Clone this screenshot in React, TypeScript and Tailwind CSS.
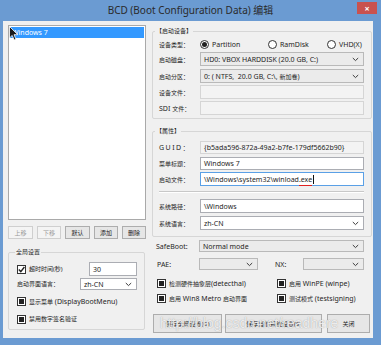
import type { ReactNode } from "react";

const font = "font-['Noto_Sans','Noto_Sans_CJK_SC',sans-serif]";

// CJK glyphs in the dialog read smaller than the Latin ones
function Zh({ children }: { children: ReactNode }) {
  return <span className="text-[6px]">{children}</span>;
}

function Chevron() {
  return (
    <svg width="7" height="5" viewBox="0 0 7 5" className="shrink-0">
      <path d="M0.8 1 L3.5 3.6 L6.2 1" fill="none" stroke="#3c3c3c" strokeWidth="1" />
    </svg>
  );
}

function Select({ children, white = false, className = "" }: { children?: ReactNode; white?: boolean; className?: string }) {
  return (
    <div
      className={`flex items-center justify-between border pl-[3px] pr-[4px] leading-none ${
        white ? "border-[#abadb3] bg-white" : "border-[#b9b9b9] bg-[#ebebeb]"
      } ${className}`}
    >
      <span className="whitespace-nowrap">{children}</span>
      <Chevron />
    </div>
  );
}

function Field({ kind = "normal", className = "", children }: { kind?: "normal" | "disabled" | "focus"; className?: string; children?: ReactNode }) {
  const look =
    kind === "disabled"
      ? "border-[#d5d5d5] bg-[#f3f3f3]"
      : kind === "focus"
      ? "border-[#5aa0e6] bg-white"
      : "border-[#abadb3] bg-white";
  return <div className={`flex items-center whitespace-nowrap border pl-[3px] leading-none ${look} ${className}`}>{children}</div>;
}

function Check({ mark = "box" }: { mark?: "box" | "tick" }) {
  return (
    <span className="flex h-[9px] w-[9px] shrink-0 items-center justify-center border border-[#333] bg-white">
      {mark === "box" ? (
        <span className="h-[5px] w-[5px] bg-[#222]" />
      ) : (
        <svg width="7" height="7" viewBox="0 0 7 7">
          <path d="M0.8 3.6 L2.8 5.6 L6.4 1" fill="none" stroke="#222" strokeWidth="1.4" />
        </svg>
      )}
    </span>
  );
}

function Radio({ on = false }: { on?: boolean }) {
  return (
    <span className="flex h-[9px] w-[9px] shrink-0 items-center justify-center rounded-full border border-[#333] bg-white">
      {on && <span className="h-[5px] w-[5px] rounded-full bg-[#222]" />}
    </span>
  );
}

function Btn({ children, disabled = false, className = "" }: { children: ReactNode; disabled?: boolean; className?: string }) {
  return (
    <div
      className={`flex items-center justify-center whitespace-nowrap border leading-none ${
        disabled ? "border-[#cfcfcf] bg-[#f4f4f4] text-[#9a9a9a]" : "border-[#adadad] bg-[#e6e6e6] text-[#222]"
      } ${className}`}
    >
      {children}
    </div>
  );
}

function Group({ title, className = "", labelClass = "", children }: { title: string; className?: string; labelClass?: string; children: ReactNode }) {
  return (
    <div className={`relative rounded-[2px] border border-[#d6d6d6] ${className}`}>
      <span className={`absolute -top-[4px] bg-[#f0f0f0] px-px text-[6px] leading-none ${labelClass}`}>{title}</span>
      {children}
    </div>
  );
}

function Row({ label, className = "", children }: { label: ReactNode; className?: string; children: ReactNode }) {
  return (
    <div className={`flex items-center ${className}`}>
      <span className="w-[41px] shrink-0 whitespace-nowrap leading-none">{label}</span>
      {children}
    </div>
  );
}

export default function App() {
  return (
    <div className={`relative flex h-[345px] w-[381px] flex-col overflow-hidden bg-[#6b9bd2] text-[7px] text-[#1e1e1e] ${font}`}>
      {/* title bar */}
      <div className="relative flex h-[21px] shrink-0 items-center justify-center text-[10px] text-[#2a2a2a]">
        BCD (Boot Configuration Data) 编辑
        <div className="absolute right-[4px] top-[2px] flex h-[12px] w-[20px] items-center justify-center bg-[#c9524f] text-[9px] font-bold leading-none text-white">
          ×
        </div>
      </div>

      {/* client */}
      <div className="mb-[7px] ml-[3px] mr-[8px] flex flex-1 bg-[#f0f0f0] pl-[5px] pt-[4px]">
        {/* left column */}
        <div className="flex w-[138px] flex-col">
          <div className="relative h-[195px] border border-[#a9a9a9] bg-white pt-[1px]">
            <div className="mx-px flex h-[11px] items-center bg-[#3399ff] pl-[2px] leading-none text-white">Windows 7</div>
            <svg width="10" height="15" viewBox="0 0 10 15" className="absolute left-0 top-0">
              <path d="M0.5 0.5 L0.5 12 L3.2 9.4 L5.2 14 L7 13.2 L5 8.7 L8.8 8.7 Z" fill="#1a1a1a" stroke="#fff" strokeWidth="0.8" />
            </svg>
          </div>
          <div className="mt-[6px] flex h-[13px] justify-between text-[6px]">
            <Btn disabled className="w-[25px]">上移</Btn>
            <Btn disabled className="w-[24px]">下移</Btn>
            <Btn className="w-[25px]">默认</Btn>
            <Btn className="w-[24px]">添加</Btn>
            <Btn className="w-[24px]">删除</Btn>
          </div>
          <Group title="全局设置" labelClass="left-[6px]" className="mt-[13px] h-[78px] w-[137px] pr-[7px] pt-[9px]">
            <div className="flex h-[14px] items-center pl-[8px]">
              <Check mark="tick" />
              <span className="ml-[3px] w-[60px] text-[6px] leading-none">超时时间(秒)</span>
              <Field className="h-[14px] flex-1">30</Field>
            </div>
            <div className="mt-[2px] flex h-[12px] items-center pl-[8px]">
              <span className="w-[63px] shrink-0 text-[6px] leading-none">启动界面语言：</span>
              <Select white className="h-[12px] flex-1">zh-CN</Select>
            </div>
            <div className="mt-[5px] flex h-[12px] items-center pl-[8px]">
              <Check />
              <span className="ml-[3px] whitespace-nowrap leading-none">
                <Zh>显示菜单</Zh> (DisplayBootMenu)
              </span>
            </div>
            <div className="mt-[6px] flex h-[12px] items-center pl-[8px]">
              <Check />
              <span className="ml-[3px] text-[6px] leading-none">禁用数字签名验证</span>
            </div>
          </Group>
        </div>

        {/* right column */}
        <div className="ml-[6px] flex w-[220px] flex-col">
          <Group title="【启动设备】" labelClass="left-[2px]" className="mt-[6px] h-[88px] pl-[6px] pr-[7px] pt-[6px]">
            <Row label={<Zh>设备类型：</Zh>} className="h-[12px]">
              <div className="flex items-center">
                <Radio on />
                <span className="ml-[3px] w-[56px] leading-none">Partition</span>
                <Radio />
                <span className="ml-[3px] w-[47px] leading-none">RamDisk</span>
                <Radio />
                <span className="ml-[3px] leading-none">VHD(X)</span>
              </div>
            </Row>
            <Row label={<Zh>启动磁盘：</Zh>} className="mt-[2px]">
              <Select className="h-[14px] flex-1">HD0: VBOX HARDDISK (20.0 GB, C:)</Select>
            </Row>
            <Row label={<Zh>启动分区：</Zh>} className="mt-[3px]">
              <Select className="h-[14px] flex-1">
                0: ( NTFS,&nbsp; 20.0 GB, C:\, <Zh>新加卷</Zh>)
              </Select>
            </Row>
            <Row label={<Zh>设备文件：</Zh>} className="mt-[2px]">
              <Field kind="disabled" className="h-[14px] flex-1" />
            </Row>
            <Row label={<>SDI <Zh>文件：</Zh></>} className="mt-[2px]">
              <Field kind="disabled" className="h-[14px] flex-1" />
            </Row>
          </Group>

          <Group title="【属性】" labelClass="left-[2px]" className="mt-[12px] h-[106px] pl-[6px] pr-[7px] pt-[9px]">
            <Row label={<span className="tracking-[1.5px]">GUID<Zh>：</Zh></span>}>
              <Field kind="disabled" className="h-[13px] flex-1">{"{b5ada596-872a-49a2-b7fe-179df5662b90}"}</Field>
            </Row>
            <Row label={<Zh>菜单标题：</Zh>} className="mt-[3px]">
              <Field className="h-[13px] flex-1">Windows 7</Field>
            </Row>
            <Row label={<Zh>启动文件：</Zh>} className="mt-[2px]">
              <Field kind="focus" className="h-[14px] flex-1">
                \Windows\system32\winload
                <span className="relative">
                  .exe
                  <span className="absolute -bottom-[3px] left-0 right-0 h-px bg-[#e02020]" />
                </span>
                <span className="ml-px h-[9px] w-px bg-[#111]" />
              </Field>
            </Row>
            <div className="mt-[5px] h-[2px] border-t border-b border-t-[#c8c8c8] border-b-white" />
            <Row label={<Zh>系统路径：</Zh>} className="mt-[6px]">
              <Field className="h-[14px] flex-1">\Windows</Field>
            </Row>
            <Row label={<Zh>系统语言：</Zh>} className="mt-[3px]">
              <Select white className="h-[14px] flex-1">zh-CN</Select>
            </Row>
          </Group>

          <div className="mt-[3px] flex h-[12px] items-center pl-[4px] pr-[8px]">
            <span className="w-[43px] shrink-0 leading-none">SafeBoot:</span>
            <Select className="h-[12px] flex-1">Normal mode</Select>
          </div>
          <div className="mt-[6px] flex h-[12px] items-center pl-[5px] pr-[8px]">
            <span className="w-[42px] shrink-0 leading-none">PAE:</span>
            <Select className="h-[12px] w-[59px]" />
            <span className="ml-[17px] w-[28px] shrink-0 leading-none">NX:</span>
            <Select className="h-[12px] flex-1" />
          </div>
          <div className="mt-[7px] flex h-[12px] items-center pl-[5px]">
            <div className="flex w-[120px] items-center">
              <Check />
              <span className="ml-[3px] whitespace-nowrap leading-none">
                <Zh>检测硬件抽象层</Zh>(detecthal)
              </span>
            </div>
            <Check />
            <span className="ml-[3px] whitespace-nowrap leading-none">
              <Zh>启用</Zh> WinPE (winpe)
            </span>
          </div>
          <div className="mt-[3px] flex h-[12px] items-center pl-[5px]">
            <div className="flex w-[120px] items-center">
              <Check />
              <span className="ml-[3px] whitespace-nowrap leading-none">
                <Zh>启用</Zh> Win8 Metro <Zh>启动界面</Zh>
              </span>
            </div>
            <Check />
            <span className="ml-[3px] whitespace-nowrap leading-none">
              <Zh>测试模式</Zh> (testsigning)
            </span>
          </div>
          <div className="mt-[10px] flex h-[19px] pl-px text-[6px]">
            <Btn className="w-[69px]">保存全局设置(G)</Btn>
            <Btn className="ml-[3px] w-[97px]">保存当前系统设置(S)</Btn>
            <Btn className="ml-[5px] w-[43px]">关闭</Btn>
          </div>
        </div>
      </div>

      {/* watermark */}
      <div className="pointer-events-none absolute left-[160px] top-[316px] font-['Liberation_Sans',sans-serif] text-[14px] leading-none text-white/80 [text-shadow:0_0_1px_rgba(110,110,110,0.7)]">
        http://blog.csdn.net/readhere
      </div>
    </div>
  );
}
